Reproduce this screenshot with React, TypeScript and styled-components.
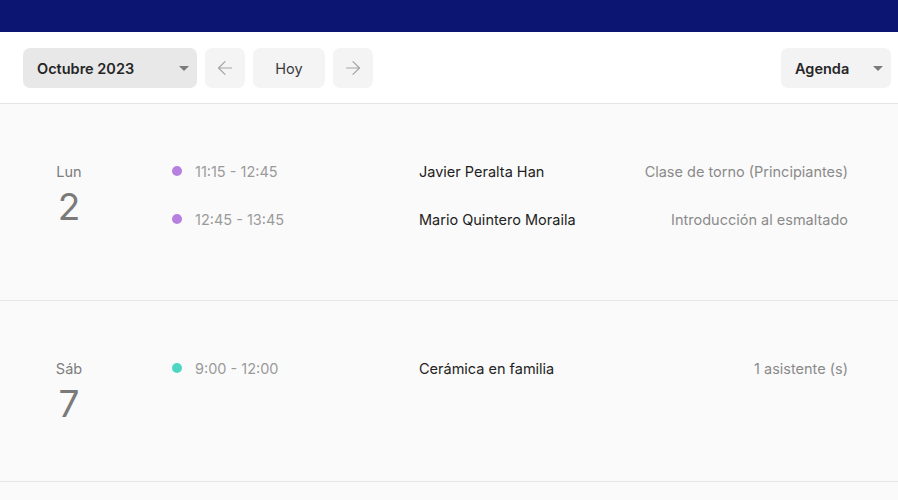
import { FunctionComponent } from 'react';
import styled, { createGlobalStyle } from 'styled-components';
import { ArrowLeft, ArrowRight } from 'lucide-react';

type Session = { time: string; title: string; detail: string; color: string };
type Day = { weekday: string; date: number; sessions: Session[] };

const PURPLE = '#b67fe0';
const TEAL = '#4fd5c3';

const days: Day[] = [
    {
        weekday: 'Lun',
        date: 2,
        sessions: [
            { time: '11:15 - 12:45', title: 'Javier Peralta Han', detail: 'Clase de torno (Principiantes)', color: PURPLE },
            { time: '12:45 - 13:45', title: 'Mario Quintero Moraila', detail: 'Introducción al esmaltado', color: PURPLE },
        ],
    },
    {
        weekday: 'Sáb',
        date: 7,
        sessions: [
            { time: '9:00 - 12:00', title: 'Cerámica en familia', detail: '1 asistente (s)', color: TEAL },
        ],
    },
];

const GlobalStyle = createGlobalStyle`
    html, body {
        margin: 0;
        background: #fafafa;
        font-family: 'Inter', 'Liberation Sans', sans-serif;
    }
`;

export default function App() {
    return (
        <>
            <GlobalStyle />
            <SPage>
                <STopBar />
                <SToolbar>
                    <SControls>
                        <SSelect $width={174} $shade="#e8e8e8">
                            Octubre 2023
                            <SCaret />
                        </SSelect>
                        <SIconButton aria-label="Anterior">
                            <ArrowLeft size={22} strokeWidth={1.3} />
                        </SIconButton>
                        <STodayButton>Hoy</STodayButton>
                        <SIconButton aria-label="Siguiente">
                            <ArrowRight size={22} strokeWidth={1.3} />
                        </SIconButton>
                    </SControls>
                    <SSelect $width={110} $shade="#f3f3f3">
                        Agenda
                        <SCaret />
                    </SSelect>
                </SToolbar>
                {days.map((day) => (
                    <DaySection key={day.date} day={day} />
                ))}
            </SPage>
        </>
    );
}

const DaySection: FunctionComponent<{ day: Day }> = ({ day }) => (
    <SSection>
        <SDayCol>
            <SWeekday>{day.weekday}</SWeekday>
            <SDate>{day.date}</SDate>
        </SDayCol>
        <SSessionList>
            {day.sessions.map((s) => (
                <SSessionRow key={s.time}>
                    <STime>
                        <SDot $color={s.color} />
                        {s.time}
                    </STime>
                    <STitle>{s.title}</STitle>
                    <SDetail>{s.detail}</SDetail>
                </SSessionRow>
            ))}
        </SSessionList>
    </SSection>
);

const SPage = styled.div`
    width: 100%;
    min-height: 500px;
    background: #fafafa;
`;

const STopBar = styled.div`
    height: 32px;
    background: #0c1672;
`;

const SToolbar = styled.div`
    display: flex;
    align-items: center;
    justify-content: space-between;
    padding: 16px 7px 15px 23px;
    background: #ffffff;
    border-bottom: 1px solid #e6e6e6;
`;

const SControls = styled.div`
    display: flex;
    align-items: center;
    gap: 8px;
`;

const SSelect = styled.div<{ $width: number; $shade: string }>`
    box-sizing: border-box;
    width: ${(p) => p.$width}px;
    height: 40px;
    display: flex;
    align-items: center;
    justify-content: space-between;
    padding: 0 8px 0 14px;
    border-radius: 7px;
    background: ${(p) => p.$shade};
    font-size: 14.5px;
    font-weight: 600;
    color: #262626;
`;

const SCaret = styled.span`
    width: 0;
    height: 0;
    border-left: 5px solid transparent;
    border-right: 5px solid transparent;
    border-top: 5px solid #7a7a7a;
`;

const SIconButton = styled.button`
    width: 40px;
    height: 40px;
    display: flex;
    align-items: center;
    justify-content: center;
    border: none;
    padding: 0;
    border-radius: 7px;
    background: #f4f4f4;
    color: #a4a4a4;
`;

const STodayButton = styled.button`
    width: 72px;
    height: 40px;
    border: none;
    border-radius: 7px;
    background: #f4f4f4;
    font-family: inherit;
    font-size: 14.5px;
    color: #3a3a3a;
`;

const SSection = styled.section`
    display: flex;
    align-items: flex-start;
    padding: 43px 50px 41px 23px;
    border-bottom: 1px solid #e6e6e6;
`;

const SDayCol = styled.div`
    width: 92px;
    min-height: 96px;
    display: flex;
    flex-direction: column;
    align-items: center;
    padding-top: 17px;
    box-sizing: border-box;
`;

const SWeekday = styled.div`
    font-size: 14.5px;
    line-height: 16px;
    color: #7d7d7d;
`;

const SDate = styled.div`
    margin-top: 5px;
    font-size: 37px;
    line-height: 44px;
    font-weight: 400;
    color: #7a7a7a;
`;

const SSessionList = styled.div`
    flex: 1;
    margin-left: 57px;
    padding-bottom: 16px;
`;

const SSessionRow = styled.div`
    height: 48px;
    display: flex;
    align-items: center;
    font-size: 14.5px;
`;

const STime = styled.div`
    width: 247px;
    display: flex;
    align-items: center;
    color: #9a9a9a;
`;

const SDot = styled.span<{ $color: string }>`
    width: 10px;
    height: 10px;
    margin-right: 13px;
    border-radius: 50%;
    background: ${(p) => p.$color};
`;

const STitle = styled.div`
    flex: 1;
    color: #222222;
`;

const SDetail = styled.div`
    color: #8a8a8a;
    text-align: right;
`;
